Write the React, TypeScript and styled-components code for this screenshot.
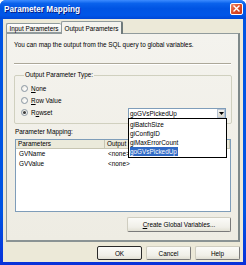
import React from "react";
import styled, { createGlobalStyle } from "styled-components";

const GlobalStyle = createGlobalStyle`
  html, body {
    margin: 0;
    padding: 0;
    background: #ffffff;
  }
  body {
    font-family: "Liberation Sans", Arial, sans-serif;
  }
`;

const radioOptions = [
  { key: "none", accel: "N", after: "one" },
  { key: "row", accel: "R", after: "ow Value" },
];

const listItems = ["giBatchSize", "giConfigID", "giMaxErrorCount", "goGVsPickedUp"];

const mappings = [
  { name: "GVName", value: "<none>" },
  { name: "GVValue", value: "<none>" },
];

export default function App() {
  return (
    <>
      <GlobalStyle />
      <Window>
        <TitleBar>
          <Title>Parameter Mapping</Title>
          <CloseButton>
            <svg width="7" height="7" viewBox="0 0 7 7">
              <path d="M1 1 L6 6 M6 1 L1 6" stroke="#fff" strokeWidth="1.4" strokeLinecap="square" />
            </svg>
          </CloseButton>
        </TitleBar>

        <Client>
          <TabStrip>
            <Tab>Input Parameters</Tab>
            <Tab active>Output Parameters</Tab>
          </TabStrip>

          <Panel>
            <Intro>You can map the output from the SQL query to global variables.</Intro>
            <Separator />

            <GroupBox>
              <Legend>Output Parameter Type:</Legend>
              {radioOptions.map((opt) => (
                <RadioRow key={opt.key}>
                  <Radio />
                  <span>
                    <u>{opt.accel}</u>
                    {opt.after}
                  </span>
                </RadioRow>
              ))}
              <RadioRow>
                <Radio checked />
                <span>
                  R<u>o</u>wset
                </span>
                <Combo>
                  <ComboText>goGVsPickedUp</ComboText>
                  <ComboArrow>
                    <svg width="5" height="3" viewBox="0 0 5 3">
                      <path d="M0 0 H5 L2.5 3 Z" fill="#000" />
                    </svg>
                  </ComboArrow>
                  <DropList>
                    {listItems.map((item, i) => (
                      <DropItem key={item}>
                        <DropText selected={i === listItems.length - 1}>{item}</DropText>
                      </DropItem>
                    ))}
                  </DropList>
                </Combo>
              </RadioRow>
            </GroupBox>

            <SectionLabel>Parameter Mapping:</SectionLabel>
            <ListView>
              <ListHeader>
                <HeaderCell>Parameters</HeaderCell>
                <HeaderCell>Output P</HeaderCell>
              </ListHeader>
              {mappings.map((m) => (
                <ListRow key={m.name}>
                  <Cell>{m.name}</Cell>
                  <Cell>{m.value}</Cell>
                </ListRow>
              ))}
            </ListView>

            <CreateButton>
              <u>C</u>reate Global Variables...
            </CreateButton>
          </Panel>

          <ButtonRow>
            <DialogButton isDefault>OK</DialogButton>
            <DialogButton>Cancel</DialogButton>
            <DialogButton>Help</DialogButton>
          </ButtonRow>
        </Client>
      </Window>
    </>
  );
}

const Window = styled.div`
  width: 246px;
  height: 265px;
  display: flex;
  flex-direction: column;
  box-sizing: border-box;
  background: linear-gradient(to bottom, #0054e3 0%, #0054e3 80%, #0831d9 100%);
  border-radius: 6px 6px 0 0;
  overflow: hidden;
  font-size: 6.4px;
  color: #000;
`;

const TitleBar = styled.div`
  height: 19px;
  flex: none;
  display: flex;
  align-items: center;
  justify-content: space-between;
  padding: 0 3px 0 4px;
  background: linear-gradient(
    to bottom,
    #3d8cff 0%,
    #0a62ec 18%,
    #0054e3 45%,
    #0056e8 80%,
    #0047d6 100%
  );
`;

const Title = styled.span`
  font-family: "Liberation Sans", Arial, sans-serif;
  font-weight: 700;
  font-size: 8.2px;
  color: #ffffff;
  text-shadow: 1px 1px 0 #0a1a80;
  margin-top: -1px;
`;

const CloseButton = styled.div`
  width: 13px;
  height: 12px;
  box-sizing: border-box;
  border: 1px solid #ffffff;
  border-radius: 2px;
  background: linear-gradient(135deg, #f08a6a 0%, #e0502a 45%, #c8361c 100%);
  display: flex;
  align-items: center;
  justify-content: center;
  margin-top: -2px;
`;

const Client = styled.div`
  flex: 1;
  margin: 0 3px 3px 3px;
  background: #ece9d8;
  display: flex;
  flex-direction: column;
  padding: 2px 3px 2px 3px;
  box-sizing: border-box;
`;

const TabStrip = styled.div`
  height: 12px;
  display: flex;
  align-items: flex-end;
  flex: none;
`;

const Tab = styled.div<{ active?: boolean }>`
  box-sizing: border-box;
  height: ${({ active }) => (active ? "13px" : "10px")};
  margin-bottom: ${({ active }) => (active ? "-1px" : "0")};
  padding: 0 4px;
  display: flex;
  align-items: center;
  justify-content: center;
  border: 1px solid #919b9c;
  border-bottom: ${({ active }) => (active ? "none" : "1px solid #919b9c")};
  border-radius: 2px 2px 0 0;
  background: ${({ active }) =>
    active ? "#f4f3ee" : "linear-gradient(to bottom, #ffffff, #ecebe5)"};
  position: relative;
  z-index: ${({ active }) => (active ? 1 : 0)};
  white-space: nowrap;
  width: ${({ active }) => (active ? "62px" : "55px")};
  ${({ active }) => (active ? "border-right: 2px solid #6f7a7b;" : "border-right: none;")}
`;

const Panel = styled.div`
  height: 209px;
  flex: none;
  box-sizing: border-box;
  border: 1px solid #919b9c;
  border-right: 2px solid #7f898a;
  border-bottom: 2px solid #8a9394;
  background: linear-gradient(to bottom, #f4f3ee 0%, #eeece3 100%);
  padding: 6px 6px 0 7px;
  display: flex;
  flex-direction: column;
`;

const Intro = styled.div`
  line-height: 10px;
  height: 10px;
  white-space: nowrap;
`;

const Separator = styled.div`
  margin-top: 13px;
  height: 0;
  border-top: 1px solid #aca899;
  border-bottom: 1px solid #ffffff;
  margin-right: 1px;
`;

const GroupBox = styled.fieldset`
  margin: 6px 0 0 0;
  padding: 3px 5px 5px 6px;
  border: 1px solid #d0d0bf;
  border-radius: 2px;
  min-width: 0;
`;

const Legend = styled.legend`
  padding: 0 1px;
  margin-left: 3px;
  line-height: 8px;
  height: 8px;
  color: #000;
`;

const RadioRow = styled.div`
  height: 12px;
  display: flex;
  align-items: center;
  gap: 3px;
`;

const Radio = styled.span<{ checked?: boolean }>`
  width: 7px;
  height: 7px;
  box-sizing: border-box;
  border-radius: 50%;
  border: 1px solid #8a97a3;
  background: radial-gradient(circle at 65% 65%, #ffffff 0%, #e4e2d8 100%);
  display: inline-flex;
  align-items: center;
  justify-content: center;
  flex: none;

  &::after {
    content: "";
    width: 3px;
    height: 3px;
    border-radius: 50%;
    background: ${({ checked }) => (checked ? "#3c3c3c" : "transparent")};
  }
`;

const Combo = styled.div`
  position: relative;
  margin-left: auto;
  margin-top: 2px;
  width: 98px;
  height: 11px;
  box-sizing: border-box;
  border: 1px solid #7f9db9;
  background: #ffffff;
  display: flex;
  align-items: center;
`;

const ComboText = styled.span`
  flex: 1;
  padding-left: 1px;
  white-space: nowrap;
`;

const ComboArrow = styled.span`
  width: 8px;
  height: 9px;
  box-sizing: border-box;
  border: 1px solid #b8c4d4;
  background: linear-gradient(to bottom, #f2f2ee, #d8d6cc);
  display: flex;
  align-items: center;
  justify-content: center;
`;

const DropList = styled.div`
  position: absolute;
  top: 9px;
  left: -1px;
  width: 99px;
  box-sizing: border-box;
  border: 1px solid #000000;
  background: #ffffff;
  z-index: 5;
  padding: 1px 0;
`;

const DropItem = styled.div`
  height: 9px;
  line-height: 9px;
  padding-left: 1px;
  white-space: nowrap;
`;

const DropText = styled.span<{ selected?: boolean }>`
  display: inline-block;
  height: 9px;
  background: ${({ selected }) => (selected ? "#316ac5" : "transparent")};
  color: ${({ selected }) => (selected ? "#ffffff" : "#000000")};
  padding-right: 1px;
`;

const SectionLabel = styled.div`
  margin-top: 4px;
  padding-left: 1px;
  line-height: 8px;
  height: 8px;
`;

const ListView = styled.div`
  margin: 3px 1px 0 1px;
  height: 73px;
  box-sizing: border-box;
  border: 1px solid #7f9db9;
  background: #ffffff;
`;

const ListHeader = styled.div`
  display: grid;
  grid-template-columns: 89px 1fr;
  height: 9px;
  box-sizing: border-box;
  background: #ebeadb;
  border-bottom: 1px solid #c7c5b2;
`;

const HeaderCell = styled.div`
  padding-left: 2px;
  line-height: 8px;
  white-space: nowrap;
  overflow: hidden;
  border-right: 1px solid #c7c5b2;
`;

const ListRow = styled.div`
  display: grid;
  grid-template-columns: 89px 1fr;
  height: 10px;
  line-height: 10px;
`;

const Cell = styled.div`
  padding-left: 3px;
  white-space: nowrap;
`;

const CreateButton = styled.div`
  margin-top: 5px;
  align-self: flex-end;
  margin-right: 1px;
  width: 104px;
  height: 15px;
  box-sizing: border-box;
  border: 1px solid #7a7a7a;
  border-top-color: #cfcdc0;
  border-left-color: #cfcdc0;
  border-radius: 2px;
  background: linear-gradient(to bottom, #fbfbf8 0%, #f0efe8 70%, #e2e0d4 100%);
  display: flex;
  align-items: center;
  justify-content: center;
  white-space: nowrap;
`;

const ButtonRow = styled.div`
  margin-top: 4px;
  display: flex;
  justify-content: flex-end;
  gap: 4px;
`;

const DialogButton = styled.div<{ isDefault?: boolean }>`
  width: 45px;
  height: 14px;
  box-sizing: border-box;
  border: 1px solid ${({ isDefault }) => (isDefault ? "#2a2a2a" : "#7a7a7a")};
  ${({ isDefault }) =>
    isDefault ? "" : "border-top-color: #cfcdc0; border-left-color: #cfcdc0;"}
  border-radius: 2px;
  background: linear-gradient(to bottom, #fbfbf8 0%, #f0efe8 70%, #e2e0d4 100%);
  display: flex;
  align-items: center;
  justify-content: center;
`;
